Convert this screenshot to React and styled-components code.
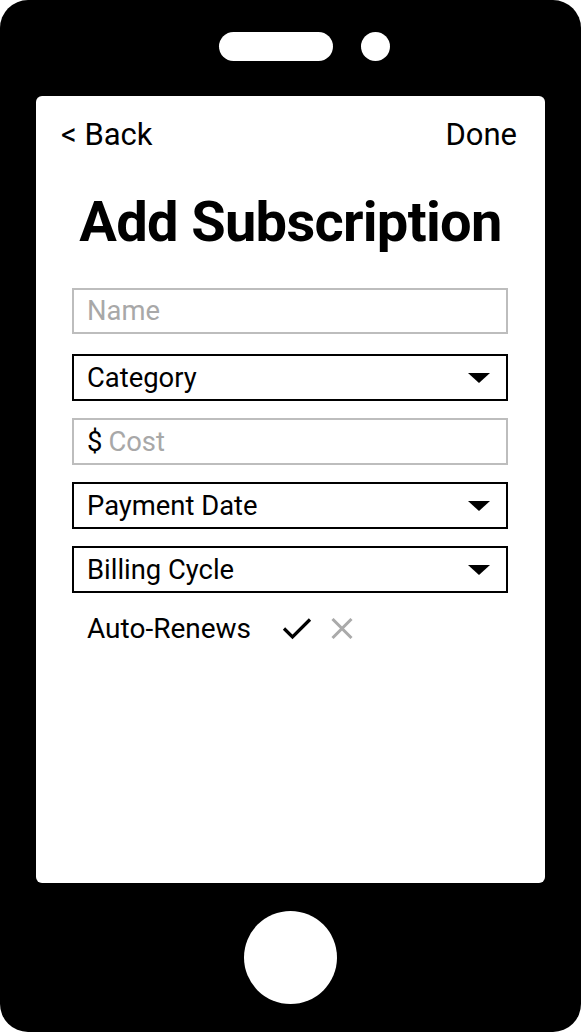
import React from "react";
import styled, { createGlobalStyle } from "styled-components";

const Global = createGlobalStyle`
  html, body { margin: 0; padding: 0; background: #fff; }
  body { font-family: Roboto, "Liberation Sans", sans-serif; }
  * { box-sizing: border-box; }
`;

const Phone = styled.div`
  width: 581px;
  height: 1032px;
  background: #000;
  border-radius: 28px;
  display: flex;
  flex-direction: column;
  align-items: stretch;
`;

const TopBar = styled.div`
  height: 96px;
  display: flex;
  justify-content: center;
  align-items: flex-start;
  padding-top: 32px;
  padding-left: 28px;
  gap: 28px;
`;

const Speaker = styled.div`
  width: 114px;
  height: 29px;
  border-radius: 15px;
  background: #fff;
`;

const Camera = styled.div`
  width: 29px;
  height: 29px;
  border-radius: 50%;
  background: #fff;
`;

const Screen = styled.div`
  margin: 0 36px;
  height: 787px;
  background: #fff;
  border-radius: 6px;
  display: flex;
  flex-direction: column;
`;

const Header = styled.div`
  display: flex;
  justify-content: space-between;
  padding: 21px 28px 0 25px;
  font-size: 31px;
  line-height: 36px;
  color: #000;
`;

const Title = styled.h1`
  margin: 37px 0 0;
  text-align: center;
  font-size: 56px;
  letter-spacing: -0.7px;
  line-height: 64px;
  font-weight: 700;
  color: #000;
`;

const Form = styled.div`
  display: flex;
  flex-direction: column;
  gap: 17px;
  padding: 0 37px 0 36px;
  margin-top: 34px;
`;

const Field = styled.div`
  height: 47px;
  border: 2px solid ${(p) => (p.$muted ? "#bdbdbd" : "#000")};
  display: flex;
  align-items: center;
  justify-content: space-between;
  padding: 0 16px 0 13px;
  font-size: 27.4px;
  color: #000;

  &:first-child {
    height: 46px;
    margin-bottom: 3px;
  }
`;

const Placeholder = styled.span`
  color: #a8a8a8;
`;

const Label = styled.span`
  display: flex;
  align-items: center;
  gap: 6px;
`;

const Arrow = styled.span`
  width: 0;
  height: 0;
  border-left: 11.5px solid transparent;
  border-right: 11.5px solid transparent;
  border-top: 10px solid #000;
`;

const ToggleRow = styled.div`
  display: flex;
  align-items: center;
  padding-left: 15px;
  height: 36px;
  font-size: 28px;
  color: #000;
`;

const Icons = styled.div`
  display: flex;
  align-items: center;
  gap: 19px;
  margin-left: 31px;
`;

const HomeArea = styled.div`
  flex: 1;
  display: flex;
  justify-content: center;
  padding-top: 28px;
`;

const HomeButton = styled.div`
  width: 93px;
  height: 93px;
  border-radius: 50%;
  background: #fff;
`;

const Check = () => (
  <svg width="30" height="23" viewBox="0 0 30 23">
    <path d="M2 11.5 L10.5 20 L28 2.5" fill="none" stroke="#000" strokeWidth="3.2" />
  </svg>
);

const Cross = () => (
  <svg width="22" height="21" viewBox="0 0 22 21">
    <path d="M1.5 1 L20.5 20 M20.5 1 L1.5 20" fill="none" stroke="#aaa" strokeWidth="3" />
  </svg>
);

const Select = ({ children }) => (
  <Field>
    <span>{children}</span>
    <Arrow />
  </Field>
);

export default function App() {
  return (
    <>
      <Global />
      <Phone>
        <TopBar>
          <Speaker />
          <Camera />
        </TopBar>
        <Screen>
          <Header>
            <span>&lt; Back</span>
            <span>Done</span>
          </Header>
          <Title>Add Subscription</Title>
          <Form>
            <Field $muted>
              <Placeholder>Name</Placeholder>
            </Field>
            <Select>Category</Select>
            <Field $muted>
              <Label>
                <span>$</span>
                <Placeholder>Cost</Placeholder>
              </Label>
            </Field>
            <Select>Payment Date</Select>
            <Select>Billing Cycle</Select>
            <ToggleRow>
              <span>Auto-Renews</span>
              <Icons>
                <Check />
                <Cross />
              </Icons>
            </ToggleRow>
          </Form>
        </Screen>
        <HomeArea>
          <HomeButton />
        </HomeArea>
      </Phone>
    </>
  );
}
